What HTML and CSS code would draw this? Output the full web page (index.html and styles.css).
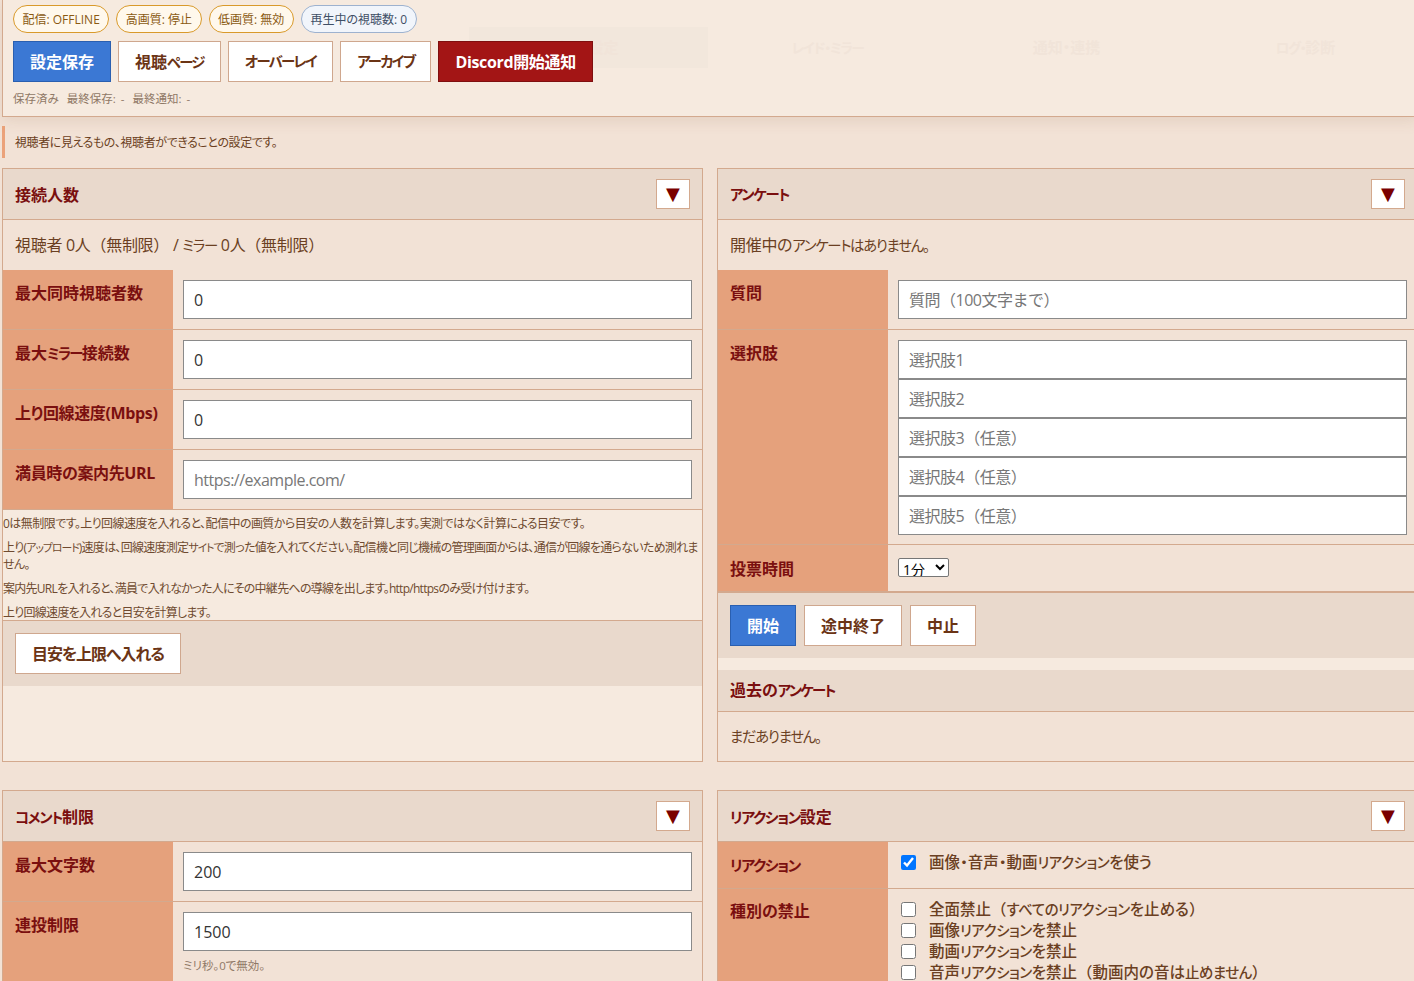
FILE: index.html
```html
<!DOCTYPE html>
<html lang="ja">
<head>
  <meta charset="UTF-8" />
  <meta name="viewport" content="width=device-width, initial-scale=1.0"/>
  <title>配信設定</title>
  <link rel="stylesheet" href="styles.css">
</head>
<body>

  <div class="topbar">
    <div class="ghost-tabs">
      <div class="ghost-tab active">視聴設定</div>
      <div class="ghost-tab"><span class="kana">レイド・ミラー</span></div>
      <div class="ghost-tab">通知・連携</div>
      <div class="ghost-tab"><span class="kana">ログ・</span>診断</div>
    </div>
    <div class="chips">
      <span class="chip">配信: OFFLINE</span>
      <span class="chip">高画質: 停止</span>
      <span class="chip">低画質: 無効</span>
      <span class="chip info">再生中の視聴数: 0</span>
    </div>
    <div class="actions">
      <button class="btn primary">設定保存</button>
      <button class="btn">視聴<span class="kana">ページ</span></button>
      <button class="btn"><span class="kana">オーバーレイ</span></button>
      <button class="btn"><span class="kana">アーカイブ</span></button>
      <button class="btn danger snug">Discord開始通知</button>
    </div>
    <div class="status">
      <span>保存済み</span>
      <span>最終保存: -</span>
      <span>最終通知: -</span>
    </div>
  </div>

  <div class="lead">視聴者に見えるもの、視聴者ができることの設定です。</div>

  <div class="panels">

    <section class="panel">
      <div class="panel-head">
        <h2>接続人数</h2>
        <button class="toggle">▼</button>
      </div>
      <div class="summary">視聴者 0人<span class="paren">（</span>無制限<span class="paren">）</span> / <span class="kana">ミラー</span> 0人<span class="paren">（</span>無制限<span class="paren">）</span></div>
      <div class="row">
        <div class="label">最大同時視聴者数</div>
        <div class="field"><input type="text" value="0"></div>
      </div>
      <div class="row">
        <div class="label">最大<span class="kana">ミラー</span>接続数</div>
        <div class="field"><input type="text" value="0"></div>
      </div>
      <div class="row">
        <div class="label snug">上り回線速度(Mbps)</div>
        <div class="field"><input type="text" value="0"></div>
      </div>
      <div class="row">
        <div class="label snug">満員時の案内先URL</div>
        <div class="field wide"><input type="text" placeholder="https://example.com/"></div>
      </div>
      <div class="notes">
        <p>0は無制限です。上り回線速度を入れると、配信中の画質から目安の人数を計算します。実測ではなく計算による目安です。</p>
        <p class="dense">上り(<span class="kana">アップロード</span>)速度は、回線速度測定<span class="kana">サイト</span>で測った値を入れてください。配信機と同じ機械の管理画面からは、通信が回線を通らないため測れま<br>せん。</p>
        <p class="dense">案内先URLを入れると、満員で入れなかった人にその中継先への導線を出します。http/httpsのみ受け付けます。</p>
        <p class="dense">上り回線速度を入れると目安を計算します。</p>
      </div>
      <div class="panel-foot">
        <button class="btn spaced">目安を上限へ入れる</button>
      </div>
    </section>

    <section class="panel">
      <div class="panel-head">
        <h2><span class="kana">アンケート</span></h2>
        <button class="toggle">▼</button>
      </div>
      <div class="summary">開催中の<span class="kana">アンケートはありません。</span></div>
      <div class="row">
        <div class="label">質問</div>
        <div class="field wide"><input type="text" placeholder="質問（100文字まで）"></div>
      </div>
      <div class="row">
        <div class="label">選択肢</div>
        <div class="field wide options">
          <input type="text" placeholder="選択肢1">
          <input type="text" placeholder="選択肢2">
          <input type="text" placeholder="選択肢3（任意）">
          <input type="text" placeholder="選択肢4（任意）">
          <input type="text" placeholder="選択肢5（任意）">
        </div>
      </div>
      <div class="row last">
        <div class="label vote">投票時間</div>
        <div class="field">
          <select><option>1分</option><option>3分</option><option>5分</option></select>
        </div>
      </div>
      <div class="panel-foot tight">
        <button class="btn primary">開始</button>
        <button class="btn">途中終了</button>
        <button class="btn">中止</button>
      </div>
      <div class="sub-head">過去の<span class="kana">アンケート</span></div>
      <div class="summary past"><span class="kana">まだありません。</span></div>
    </section>

    <section class="panel">
      <div class="panel-head">
        <h2><span class="kana">コメント</span>制限</h2>
        <button class="toggle">▼</button>
      </div>
      <div class="row">
        <div class="label">最大文字数</div>
        <div class="field"><input type="text" value="200"></div>
      </div>
      <div class="row">
        <div class="label">連投制限</div>
        <div class="field">
          <input type="text" value="1500">
          <div class="hint">ミリ秒。0で無効。</div>
        </div>
      </div>
    </section>

    <section class="panel">
      <div class="panel-head">
        <h2><span class="kana-s">リアクション</span>設定</h2>
        <button class="toggle">▼</button>
      </div>
      <div class="row">
        <div class="label"><span class="kana-s">リアクション</span></div>
        <div class="field checks single">
          <label><input type="checkbox" checked><span>画像・音声・動画<span class="kana-s">リアクション</span>を使う</span></label>
        </div>
      </div>
      <div class="row">
        <div class="label raised">種別の禁止</div>
        <div class="field checks">
          <label><input type="checkbox"><span>全面禁止<span class="paren">（</span><span class="kana-s">すべてのリアクション</span>を止める<span class="paren">）</span></span></label>
          <label><input type="checkbox"><span>画像<span class="kana-s">リアクション</span>を禁止</span></label>
          <label><input type="checkbox"><span>動画<span class="kana-s">リアクション</span>を禁止</span></label>
          <label><input type="checkbox"><span>音声<span class="kana-s">リアクション</span>を禁止<span class="paren">（</span>動画内の音は<span class="kana-s">止めません</span><span class="paren">）</span></span></label>
        </div>
      </div>
    </section>

  </div>

</body>
</html>
```

FILE: styles.css
```css
* {
  box-sizing: border-box;
}

html, body {
  height: 100%;
  overflow: hidden;
}

body {
  margin: 0;
  width: 1414px;
  background: #f2e2d6;
  color: #6b3f22;
  font-family: "Open Sans", "Noto Sans CJK JP", sans-serif;
  font-size: 16px;
  font-feature-settings: "palt";
}

button, input, select {
  font-family: inherit;
  font-feature-settings: inherit;
}

/* katakana runs are much narrower in the original UI font */
.kana {
  font-size: 0.9em;
  letter-spacing: -0.09em;
}

.kana-s {
  font-size: 0.93em;
  letter-spacing: -0.03em;
}

.btn .kana, .label .kana, .sub-head .kana {
  letter-spacing: -0.12em;
}

.panel-head .kana-s, .label .kana-s {
  letter-spacing: -0.1em;
}

.paren {
  font-feature-settings: normal;
}

/* top bar */
.topbar {
  position: relative;
  height: 117px;
  margin-left: 2px;
  width: 1416px;
  padding: 5px 10px 0;
  background: #f6eadf;
  border: 1px solid #d3a98e;
  border-top: none;
  box-shadow: 0 4px 14px rgba(130, 80, 40, 0.12);
}

.ghost-tabs {
  position: absolute;
  left: 466px;
  top: 27px;
  display: flex;
  height: 41px;
}

.ghost-tab {
  width: 239px;
  line-height: 41px;
  text-align: center;
  font-size: 15px;
  font-weight: 700;
  color: #f1e4d9;
}

.ghost-tab.active {
  background: #f2e7dc;
}

.chips {
  position: relative;
  display: flex;
  gap: 7px;
}

.chip {
  height: 28px;
  padding: 0 8.5px;
  border: 1px solid #d99a2b;
  border-radius: 14px;
  background: #fff8ec;
  color: #8a5a12;
  font-size: 12px;
  line-height: 27px;
}

.chip.info {
  border-color: #9db2cf;
  background: #f1f5fb;
  color: #3f4f66;
}

.actions {
  position: relative;
  display: flex;
  gap: 7px;
  margin-top: 8px;
}

.status {
  position: relative;
  display: flex;
  gap: 8px;
  margin-top: 9px;
  font-size: 11.5px;
  line-height: 16px;
  color: #8f7866;
  word-spacing: 2px;
}

/* buttons */
.btn {
  height: 41px;
  padding: 0 16px 2px;
  border: 1px solid #cfa78e;
  background: #fff;
  color: #6b3415;
  font-size: 16px;
  font-weight: 700;
  cursor: pointer;
}

.btn.primary {
  background: #3b78d4;
  border-color: #2a5fb0;
  color: #fff;
}

.btn.danger {
  background: #a31515;
  border-color: #7f0f0f;
  color: #fff;
}

.btn.spaced {
  letter-spacing: -1.1px;
}

.snug {
  letter-spacing: -0.35px;
}

.lead {
  margin: 9px 0 10px 2px;
  height: 32px;
  padding: 1px 0 0 10px;
  border-left: 3px solid #eba27a;
  font-size: 12px;
  line-height: 32px;
  letter-spacing: -0.42px;
}

/* panels */
.panels {
  display: grid;
  grid-template-columns: 701px 701px;
  grid-auto-rows: min-content;
  gap: 28px 14px;
  margin-left: 2px;
  width: 1416px;
}

.panel {
  background: #f6eadf;
  border: 1px solid #d3a98e;
}

.panels .panel:nth-child(-n+2) {
  height: 594px;
}

.panels .panel:nth-child(n+3) {
  height: 240px;
}

.panel-head {
  display: flex;
  justify-content: space-between;
  align-items: center;
  height: 51px;
  padding: 0 12px;
  background: #e9d9cc;
  border-bottom: 1px solid #d3a98e;
}

.panel-head h2 {
  margin: 0;
  color: #7a0f0f;
  font-size: 16px;
  font-weight: 700;
}

.toggle {
  width: 34px;
  height: 30px;
  padding: 0;
  border: 1px solid #d3a98e;
  background: #fff;
  color: #7a0000;
  font-family: "DejaVu Sans", sans-serif;
  font-size: 18px;
  line-height: 26px;
}

.summary {
  height: 50px;
  padding: 0 12px;
  background: #f2e2d6;
  font-size: 16px;
  line-height: 50px;
  letter-spacing: -0.3px;
}

.summary.past {
  height: 49px;
  line-height: 49px;
}

.row {
  display: grid;
  grid-template-columns: 170px 1fr;
  background: #f2e2d6;
  border-bottom: 1px solid #d3a98e;
}

.row.last {
  border-bottom: 2px solid #d3a98e;
}

.label {
  padding: 12px;
  background: #e5a17c;
  color: #7a0f0f;
  font-size: 16px;
  font-weight: 700;
  line-height: 22px;
}

.label.vote {
  padding-top: 13px;
  padding-bottom: 11px;
}

.label.raised {
  padding-top: 11px;
}

.field {
  padding: 10px;
  min-width: 0;
}

.field.options {
  padding-bottom: 9px;
}

.field input[type="text"] {
  display: block;
  width: 100%;
  height: 39px;
  padding: 0 10px;
  border: 1px solid #8a8a8a;
  background: #fff;
  color: #333;
  font-size: 16px;
}

.field input::placeholder {
  color: #777;
}

.field.wide input[type="text"] {
  font-feature-settings: normal;
  letter-spacing: -0.5px;
}

.field select {
  display: block;
  width: 51px;
  height: 19px;
  padding: 0;
  font-size: 14px;
  background: #fff;
  color: #000;
  border: 1px solid #767676;
  border-radius: 2px;
  margin-top: 3px;
}

.hint {
  margin-top: 7px;
  font-size: 11.5px;
  line-height: 16px;
  color: #8f7866;
}

.notes {
  height: 110px;
  padding: 5px 0 0;
  font-size: 12px;
  line-height: 17px;
  color: #6f4a30;
  letter-spacing: -0.55px;
}

.notes p {
  margin: 0 0 7px;
}

.notes p:last-child {
  margin-bottom: 0;
}

.notes p.dense {
  letter-spacing: -0.72px;
}

.panel-foot {
  display: flex;
  gap: 8px;
  height: 66px;
  padding: 12px;
  background: #e9d9cc;
  border-top: 1px solid #d3a98e;
}

.panel-foot.tight {
  height: 65px;
  border-top: none;
  margin-bottom: 12px;
}

.sub-head {
  height: 42px;
  padding: 0 12px;
  background: #e9d9cc;
  border-bottom: 1px solid #d3a98e;
  color: #7a0f0f;
  font-size: 16px;
  font-weight: 700;
  line-height: 41px;
}

.checks {
  display: flex;
  flex-direction: column;
  padding: 10px 12px 0 13px;
}

.checks.single {
  padding-bottom: 13px;
}

.checks label {
  display: flex;
  align-items: center;
  gap: 13px;
  height: 21px;
  font-size: 15.5px;
  font-weight: 500;
  line-height: 21px;
}

.checks input {
  width: 15px;
  height: 15px;
  margin: 0;
}
```
